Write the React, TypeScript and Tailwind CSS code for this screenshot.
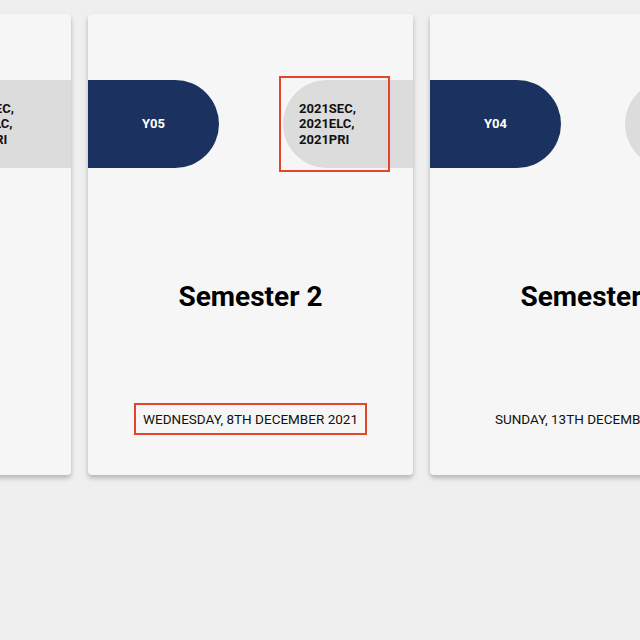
import React from "react";

type CardData = { year: string; title: string; date: string; highlight?: boolean };

const cards: CardData[] = [
  { year: "Y06", title: "Semester 1", date: "FRIDAY, 3RD DECEMBER 2021" },
  { year: "Y05", title: "Semester 2", date: "WEDNESDAY, 8TH DECEMBER 2021", highlight: true },
  { year: "Y04", title: "Semester 1", date: "SUNDAY, 13TH DECEMBER 2021" },
];

function Card({ c }: { c: CardData }) {
  return (
    <div className="relative flex h-[461px] w-[325px] shrink-0 flex-col rounded-[4px] bg-[#f6f6f6] shadow-[0_3px_5px_rgba(0,0,0,0.25)]">
      <div className="mt-[66px] flex h-[88px] items-stretch justify-between">
        <div className="flex w-[131px] items-center justify-center rounded-r-[44px] bg-[#1b3260] text-[13px] font-bold text-white">
          {c.year}
        </div>
        <div className="relative flex w-[130px] items-center rounded-l-[44px] bg-[#dcdcdc] pl-[16px] text-[13px] font-bold leading-[15.5px] text-[#111]">
          <div>
            2021SEC,
            <br />
            2021ELC,
            <br />
            2021PRI
          </div>
          {c.highlight && (
            <div className="absolute left-[-4px] top-[-4px] h-[96px] w-[111px] border-2 border-[#e2462a]" />
          )}
        </div>
      </div>
      <div className="mt-[112px] text-center text-[28px] font-bold leading-[33px] text-black">{c.title}</div>
      <div className="mt-[90px] flex justify-center">
        <div
          className={
            c.highlight
              ? "border-2 border-[#e2462a] px-[7px] py-[6px] text-[13.5px] leading-[16px] text-[#111]"
              : "border-2 border-transparent px-[7px] py-[6px] text-[13.5px] leading-[16px] text-[#111]"
          }
        >
          {c.date}
        </div>
      </div>
    </div>
  );
}

export default function App() {
  return (
    <div
      className="h-[640px] w-[640px] overflow-hidden bg-[#efefef]"
      style={{ fontFamily: "Roboto, 'Liberation Sans', sans-serif" }}
    >
      <div className="ml-[-254px] flex gap-[17px] pt-[14px]">
        {cards.map((c, i) => (
          <Card key={i} c={c} />
        ))}
      </div>
    </div>
  );
}
